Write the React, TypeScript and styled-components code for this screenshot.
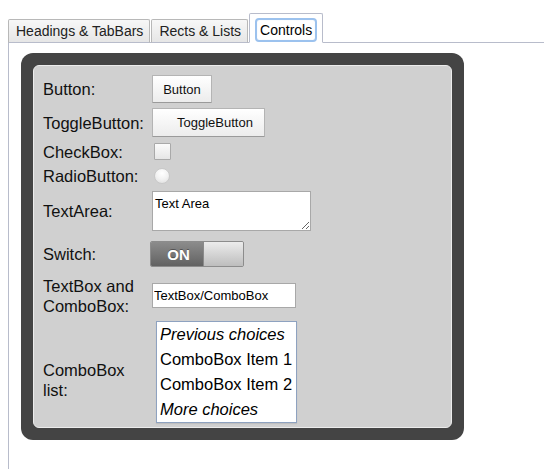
import React from "react";
import styled, { createGlobalStyle } from "styled-components";

const Global = createGlobalStyle`
  html, body { margin: 0; padding: 0; background: #ffffff; }
  body { font-family: "Liberation Sans", Arial, sans-serif; color: #111; }
  * { box-sizing: border-box; }
`;

const Page = styled.div`
  padding: 12px 0 0 8px;
  height: 469px;
  overflow: hidden;
  display: flex;
  flex-direction: column;
`;

const TabBar = styled.div`
  display: flex;
  align-items: flex-end;
  gap: 1px;
  height: 30px;
`;

const Tab = styled.div<{ $active?: boolean }>`
  height: ${(p) => (p.$active ? 30 : 24)}px;
  padding: ${(p) => (p.$active ? "4px 5px 0 5px" : "0 6px 0 7px")};
  display: flex;
  align-items: ${(p) => (p.$active ? "flex-start" : "center")};
  font-size: 14px;
  color: #222;
  border: 1px solid ${(p) => (p.$active ? "#b8bccb" : "#b8b8b8")};
  border-bottom: ${(p) => (p.$active ? "1px solid #fff" : "1px solid #b8bccb")};
  border-radius: 2px 2px 0 0;
  background: ${(p) =>
    p.$active ? "#ffffff" : "linear-gradient(#f7f7f7, #e6e6e6)"};
  position: relative;
  z-index: 1;
  margin-bottom: -1px;
`;

const FocusRing = styled.span`
  display: flex;
  align-items: center;
  height: 24px;
  padding: 0 3px;
  border: 2px solid #9cc2ee;
  border-radius: 4px;
  box-shadow: inset 0 0 1px #cde0f6;
  color: #000;
`;

const Content = styled.div`
  flex: 1;
  border-top: 1px solid #b8bccb;
  border-left: 1px solid #b8bccb;
  padding: 10px 0 0 12px;
`;

const DarkFrame = styled.div`
  width: 443px;
  padding: 12px;
  background: #444444;
  border-radius: 12px;
`;

const InnerPanel = styled.div`
  background: #d0d0d0;
  border: 1px solid #ececec;
  border-radius: 6px;
  padding: 6px 0 2px 9px;
  display: grid;
  grid-template-columns: 109px 1fr;
`;

const Label = styled.div<{ $h: number; $shift?: number }>`
  height: ${(p) => p.$h}px;
  display: flex;
  align-items: center;
  font-size: 16.5px;
  line-height: 20px;
  color: #111;
  padding-top: ${(p) => (p.$shift ?? 0) * 2}px;
`;

const Cell = styled.div<{ $h: number }>`
  height: ${(p) => p.$h}px;
  display: flex;
  align-items: center;
`;

const PushButton = styled.button<{ $w: number; $h: number; $padLeft?: number }>`
  width: ${(p) => p.$w}px;
  height: ${(p) => p.$h}px;
  padding: 0 0 0 ${(p) => p.$padLeft ?? 0}px;
  text-align: ${(p) => (p.$padLeft ? "left" : "center")};
  font-family: "Liberation Sans", Arial, sans-serif;
  font-size: 13px;
  color: #111;
  background: linear-gradient(#ffffff, #ececec);
  border: 1px solid #b4b4b4;
  border-bottom-color: #9a9a9a;
  border-radius: 1px;
`;

const CheckBox = styled.span`
  display: block;
  width: 17px;
  height: 17px;
  margin-left: 2px;
  background: linear-gradient(#fbfbfb, #e6e6e6);
  border: 1px solid #a9a9a9;
  border-radius: 1px;
`;

const Radio = styled.span`
  display: block;
  width: 16px;
  height: 16px;
  margin-left: 2px;
  border-radius: 50%;
  background: radial-gradient(circle at 50% 30%, #ffffff 0%, #f2f2f2 50%, #dcdcdc 100%);
  border: 1px solid #c9c9c9;
`;

const TextArea = styled.textarea`
  width: 159px;
  height: 40px;
  padding: 4px 2px 0 2px;
  font-family: "Liberation Sans", Arial, sans-serif;
  font-size: 13px;
  line-height: 15px;
  color: #000;
  background: #fff;
  border: 1px solid #a8a8a8;
  border-radius: 0;
  outline: none;
`;

const Switch = styled.div`
  width: 94px;
  height: 26px;
  margin-left: -2px;
  display: flex;
  border: 1px solid #8c8c8c;
  border-radius: 2px;
  overflow: hidden;
`;

const SwitchOn = styled.span`
  width: 52px;
  display: flex;
  align-items: center;
  justify-content: center;
  padding-left: 3px;
  font-size: 15px;
  font-weight: bold;
  color: #fff;
  text-shadow: 0 -1px 0 rgba(0, 0, 0, 0.35);
  background: linear-gradient(#8c8c8c, #626262);
`;

const SwitchKnob = styled.span`
  flex: 1;
  background: linear-gradient(#ececec, #bdbdbd);
  border-left: 1px solid #8a8a8a;
`;

const TextBox = styled.input`
  width: 144px;
  height: 25px;
  padding: 0 1px;
  font-family: "Liberation Sans", Arial, sans-serif;
  font-size: 13px;
  color: #000;
  background: #fff;
  border: 1px solid #a8a8a8;
  border-radius: 0;
  outline: none;
`;

const ListBox = styled.div`
  width: 141px;
  margin-left: 4px;
  border: 1px solid #8ea2c0;
  background: #fff;
  box-shadow: 0 1px 1px rgba(0, 0, 0, 0.08);
  padding: 0 3px;
`;

const ListItem = styled.div<{ $italic?: boolean }>`
  height: 25px;
  line-height: 25px;
  font-size: 16.5px;
  font-style: ${(p) => (p.$italic ? "italic" : "normal")};
  color: #000;
  white-space: nowrap;
`;

const rows: { label: React.ReactNode; h: number; shift?: number; control: React.ReactNode }[] = [
  {
    label: "Button:",
    h: 34,
    control: (
      <PushButton $w={60} $h={28}>
        Button
      </PushButton>
    ),
  },
  {
    label: "ToggleButton:",
    h: 33,
    control: (
      <PushButton $w={113} $h={29} $padLeft={24}>
        ToggleButton
      </PushButton>
    ),
  },
  { label: "CheckBox:", h: 25, control: <CheckBox /> },
  { label: "RadioButton:", h: 23, control: <Radio /> },
  {
    label: "TextArea:",
    h: 48,
    control: <TextArea readOnly defaultValue="Text Area" />,
  },
  {
    label: "Switch:",
    h: 38,
    control: (
      <Switch>
        <SwitchOn>ON</SwitchOn>
        <SwitchKnob />
      </Switch>
    ),
  },
  {
    label: (
      <>
        TextBox and
        <br />
        ComboBox:
      </>
    ),
    h: 45,
    control: <TextBox readOnly defaultValue="TextBox/ComboBox" />,
  },
  {
    label: (
      <>
        ComboBox
        <br />
        list:
      </>
    ),
    h: 107,
    shift: 8,
    control: (
      <ListBox>
        <ListItem $italic>Previous choices</ListItem>
        <ListItem>ComboBox Item 1</ListItem>
        <ListItem>ComboBox Item 2</ListItem>
        <ListItem $italic>More choices</ListItem>
      </ListBox>
    ),
  },
];

export default function App() {
  return (
    <>
      <Global />
      <Page>
        <TabBar>
          <Tab>Headings &amp; TabBars</Tab>
          <Tab>Rects &amp; Lists</Tab>
          <Tab $active>
            <FocusRing>Controls</FocusRing>
          </Tab>
        </TabBar>
        <Content>
          <DarkFrame>
            <InnerPanel>
              {rows.map((r, i) => (
                <React.Fragment key={i}>
                  <Label $h={r.h} $shift={r.shift}>
                    <span>{r.label}</span>
                  </Label>
                  <Cell $h={r.h}>{r.control}</Cell>
                </React.Fragment>
              ))}
            </InnerPanel>
          </DarkFrame>
        </Content>
      </Page>
    </>
  );
}
